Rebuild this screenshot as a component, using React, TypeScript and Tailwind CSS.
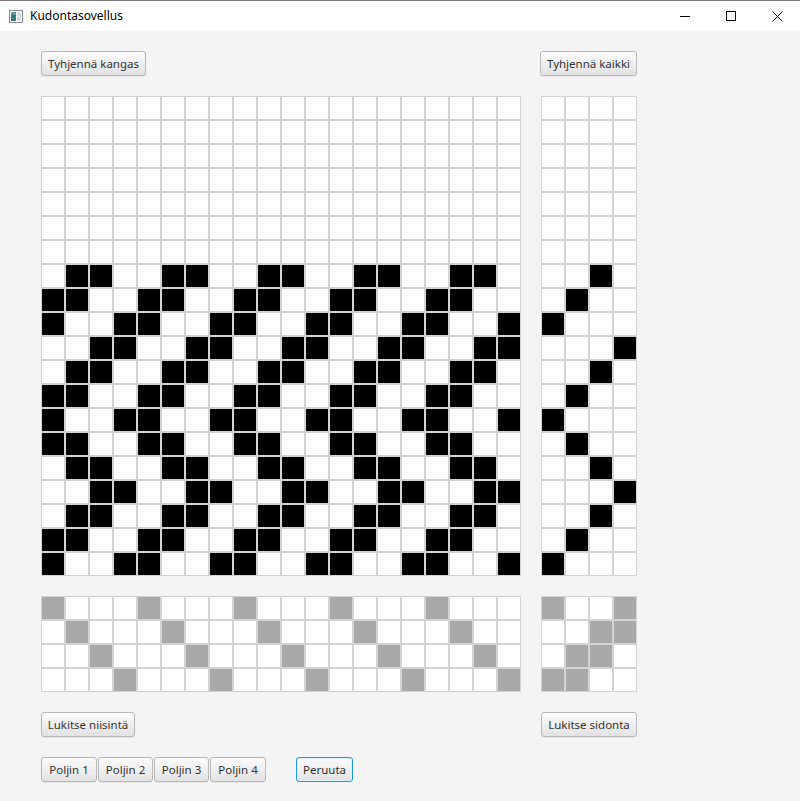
import React from "react";

const FONT = { fontFamily: '"Segoe UI", "Noto Sans", "Open Sans", Arial, sans-serif' };

const treadling: (number | null)[] = [
  null, null, null, null, null, null, null,
  2, 1, 0, 3, 2, 1, 0, 1, 2, 3, 2, 1, 0,
];
const clothSets: Record<number, number[]> = { 0: [0, 3], 1: [0, 1], 2: [1, 2], 3: [2, 3] };
const tieup = [
  [1, 0, 0, 1],
  [0, 0, 1, 1],
  [0, 1, 1, 0],
  [1, 1, 0, 0],
];

function Cell({ fill }: { fill: "w" | "b" | "g" }) {
  const bg = fill === "b" ? "bg-black" : fill === "g" ? "bg-[#a9a9a9]" : "bg-white";
  return <div className={`w-[24px] h-[24px] border border-[#d3d3d3] ${bg}`} />;
}

function Btn({ label, w, focused }: { label: string; w: string; focused?: boolean }) {
  const border = focused
    ? "border-[#1c9bd4] shadow-[inset_0_0_0_1px_#d8eef8]"
    : "border-[#b8b8b8] shadow-[0_1px_0_rgba(0,0,0,0.06)]";
  return (
    <div
      className={`${w} h-[25px] shrink-0 rounded-[3px] border ${border} bg-linear-to-b from-[#fcfcfc] to-[#e2e2e2] text-[11.5px] text-[#333333] flex items-center justify-center`}
      style={FONT}
    >
      {label}
    </div>
  );
}

export default function App() {
  const cloth = treadling.map((t) =>
    Array.from({ length: 20 }, (_, c) => (t !== null && clothSets[t].includes(c % 4) ? "b" : "w"))
  );
  return (
    <div className="w-[800px] h-[801px] bg-[#f4f4f4] flex flex-col overflow-hidden" style={FONT}>
      {/* title bar */}
      <div className="h-[31px] shrink-0 bg-white border-t border-[#777777] flex items-center">
        <div className="ml-[9px] mt-[1px]">
          <svg width="14" height="13" viewBox="0 0 14 13">
            <rect x="0.5" y="0.5" width="13" height="12" fill="#ffffff" stroke="#8a8a8a" />
            <rect x="2" y="2" width="5" height="9" fill="#3d7a78" />
            <rect x="2" y="2" width="5" height="3" fill="#5f9ea0" />
            <rect x="8" y="2" width="4" height="9" fill="#d7dde3" />
          </svg>
        </div>
        <div className="ml-[7px] text-[12px] text-black leading-none">Kudontasovellus</div>
        <div className="ml-auto flex items-center">
          <div className="w-[46px] h-[30px] flex items-center justify-center">
            <svg width="10" height="10" viewBox="0 0 10 10">
              <line x1="0" y1="5.5" x2="10" y2="5.5" stroke="#000" strokeWidth="1" />
            </svg>
          </div>
          <div className="w-[46px] h-[30px] flex items-center justify-center">
            <svg width="10" height="10" viewBox="0 0 10 10">
              <rect x="0.5" y="0.5" width="9" height="9" fill="none" stroke="#000" strokeWidth="1" />
            </svg>
          </div>
          <div className="w-[46px] h-[30px] flex items-center justify-center">
            <svg width="11" height="11" viewBox="0 0 11 11">
              <line x1="0.5" y1="0.5" x2="10.5" y2="10.5" stroke="#000" strokeWidth="1" />
              <line x1="10.5" y1="0.5" x2="0.5" y2="10.5" stroke="#000" strokeWidth="1" />
            </svg>
          </div>
        </div>
      </div>

      {/* content */}
      <div className="pl-[41px] pt-[20px] flex flex-col">
        <div className="w-[596px] flex justify-between">
          <Btn label="Tyhjennä kangas" w="w-[105px]" />
          <Btn label="Tyhjennä kaikki" w="w-[97px]" />
        </div>

        <div className="mt-[20px] flex gap-[20px]">
          <div className="grid grid-cols-[repeat(20,24px)]">
            {cloth.flatMap((row, r) => row.map((f, c) => <Cell key={`${r}-${c}`} fill={f as "w" | "b"} />))}
          </div>
          <div className="grid grid-cols-[repeat(4,24px)]">
            {treadling.flatMap((t, r) =>
              [0, 1, 2, 3].map((c) => <Cell key={`${r}-${c}`} fill={t === c ? "b" : "w"} />)
            )}
          </div>
        </div>

        <div className="mt-[20px] flex gap-[20px]">
          <div className="grid grid-cols-[repeat(20,24px)]">
            {[0, 1, 2, 3].flatMap((r) =>
              Array.from({ length: 20 }, (_, c) => <Cell key={`${r}-${c}`} fill={c % 4 === r ? "g" : "w"} />)
            )}
          </div>
          <div className="grid grid-cols-[repeat(4,24px)]">
            {tieup.flatMap((row, r) => row.map((v, c) => <Cell key={`${r}-${c}`} fill={v ? "g" : "w"} />))}
          </div>
        </div>

        <div className="mt-[20px] w-[596px] flex justify-between">
          <Btn label="Lukitse niisintä" w="w-[94px]" />
          <Btn label="Lukitse sidonta" w="w-[96px]" />
        </div>

        <div className="mt-[20px] flex items-center">
          <div className="flex gap-[1px]">
            <Btn label="Poljin 1" w="w-[56px]" />
            <Btn label="Poljin 2" w="w-[55px]" />
            <Btn label="Poljin 3" w="w-[55px]" />
            <Btn label="Poljin 4" w="w-[56px]" />
          </div>
          <div className="ml-[30px]">
            <Btn label="Peruuta" w="w-[57px]" focused />
          </div>
        </div>
      </div>
    </div>
  );
}
